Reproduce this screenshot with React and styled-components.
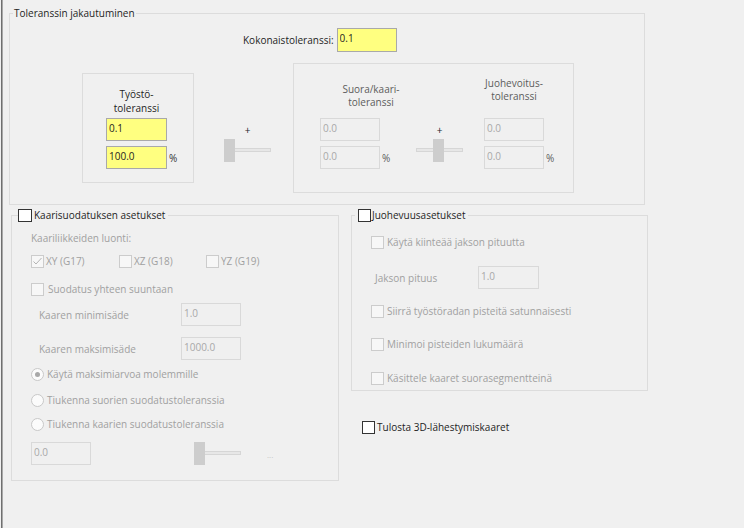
import React from 'react';
import styled, { createGlobalStyle } from 'styled-components';

const FONT = "'Open Sans', 'Liberation Sans', Arial, sans-serif";

const GlobalStyle = createGlobalStyle`
  html, body {
    margin: 0;
    padding: 0;
    background: #f0f0f0;
  }
  body {
    font-family: ${FONT};
    font-size: 10px;
    color: #1e1e1e;
  }
`;

const DISABLED = '#a0a0a0';

const Window = styled.div`
  width: 744px;
  height: 528px;
  box-sizing: border-box;
  overflow: hidden;
  padding-top: 7px;
  background: linear-gradient(
    to right,
    #f0f0f0 1px,
    #6f6f6f 1px,
    #6f6f6f 2px,
    #a8a8a8 2px,
    #a8a8a8 3px,
    #f0f0f0 3px
  );
`;

// === GROUP BOXES === //
const Group = styled.fieldset`
  margin: 0 0 0 ${({ $ml }) => $ml || 0}px;
  padding: 0 0 ${({ $pb }) => $pb}px;
  width: ${({ $w }) => $w}px;
  box-sizing: border-box;
  min-width: 0;
  border: 1px solid #dcdcdc;
`;

const Legend = styled.legend`
  margin-left: ${({ $ml }) => $ml}px;
  padding: 0 ${({ $pr }) => $pr}px 0 ${({ $pl }) => $pl}px;
  line-height: 13px;
  height: 13px;
  white-space: nowrap;
`;

const LegendInner = styled.span`
  display: inline-flex;
  align-items: center;
  gap: ${({ $gap }) => $gap}px;
  vertical-align: top;
`;

// === FIELDS === //
const Field = styled.input`
  width: ${({ $w }) => $w || 60}px;
  height: ${({ $h }) => $h || 23}px;
  box-sizing: border-box;
  margin: 0;
  padding: 0 1px 4px 2px;
  font-family: ${FONT};
  font-size: 10px;
  outline: none;
  flex: none;
  background: ${({ $yellow }) => ($yellow ? '#ffff80' : '#f0f0f0')};
  border: 1px solid ${({ $yellow }) => ($yellow ? '#a9a9a9' : '#d9d9d9')};
  color: ${({ $yellow }) => ($yellow ? '#1e1e1e' : '#a8a8a8')};
`;

const Pct = styled.span`
  margin-left: 2px;
  color: ${({ $dim }) => ($dim ? '#5c5c5c' : '#333')};
`;

// === TOP SECTION === //
const TotalRow = styled.div`
  display: flex;
  align-items: center;
  gap: 3px;
  height: 24px;
  margin-top: 8px;
  padding-left: 233px;
`;

const SplitRow = styled.div`
  display: flex;
  align-items: center;
  margin-top: 11px;
  padding-left: 72px;
`;

const Frame = styled.div`
  display: flex;
  align-items: flex-end;
  box-sizing: border-box;
  width: ${({ $w }) => $w}px;
  height: ${({ $h }) => $h}px;
  margin-left: ${({ $ml }) => $ml || 0}px;
  padding: 0 0 ${({ $pb }) => $pb}px ${({ $pl }) => $pl}px;
  border: 1px solid #dcdcdc;
`;

const Col = styled.div`
  display: flex;
  flex-direction: column;
  gap: 5px;
  width: ${({ $w }) => $w}px;
  margin-left: ${({ $ml }) => $ml || 0}px;
  flex: none;
`;

const ColTitle = styled.div`
  display: flex;
  flex-direction: column;
  align-items: center;
  width: ${({ $w }) => $w || 60}px;
  margin-left: ${({ $shift }) => $shift || 0}px;
  margin-bottom: ${({ $mb }) => $mb - 5}px;
  line-height: ${({ $lh }) => $lh}px;
  white-space: nowrap;
  color: ${({ $dim }) => ($dim ? '#5c5c5c' : '#1e1e1e')};
`;

const FieldLine = styled.div`
  display: flex;
  align-items: center;
`;

// === SLIDER === //
const SliderWrap = styled.div`
  display: flex;
  flex-direction: column;
  align-items: center;
  align-self: ${({ $top }) => ($top === undefined ? 'center' : 'flex-start')};
  margin-top: ${({ $top }) => $top || 0}px;
  margin-left: ${({ $ml }) => $ml || 0}px;
  flex: none;
`;

const Plus = styled.div`
  height: 12px;
  line-height: 12px;
  margin-bottom: 3px;
  font-size: 10px;
`;

const Track = styled.div`
  position: relative;
  width: 47px;
  height: 23px;

  &::before {
    content: '';
    position: absolute;
    left: 0;
    right: 0;
    top: 9px;
    height: 4px;
    box-sizing: border-box;
    background: #e7e7e7;
    border: 1px solid #d6d6d6;
  }
`;

const Thumb = styled.div`
  position: absolute;
  top: 0;
  left: ${({ $pos }) => $pos}px;
  width: 11px;
  height: 23px;
  background: #cdcdcd;
`;

function Slider({ pos, plus, top, ml }) {
  return (
    <SliderWrap $top={top} $ml={ml}>
      {plus && <Plus>+</Plus>}
      <Track>
        <Thumb $pos={pos} />
      </Track>
    </SliderWrap>
  );
}

// === LOWER SECTION === //
const Lower = styled.div`
  display: flex;
  align-items: flex-start;
  gap: 12px;
  margin-top: 4px;
  padding-left: 11px;
`;

const RightCol = styled.div`
  display: flex;
  flex-direction: column;
`;

const Box = styled.span`
  display: inline-flex;
  align-items: center;
  justify-content: center;
  width: ${({ $size }) => $size || 13}px;
  height: 13px;
  box-sizing: border-box;
  flex: none;
  border: 1px solid ${({ $on }) => ($on ? '#333' : '#cccccc')};
  background: ${({ $on }) => ($on ? '#fff' : '#f7f7f7')};
`;

const Round = styled(Box)`
  border-radius: 50%;
  border-color: #c8c8c8;
  background: #fbfbfb;

  &::after {
    content: '';
    display: ${({ $checked }) => ($checked ? 'block' : 'none')};
    width: 5px;
    height: 5px;
    border-radius: 50%;
    background: #a8a8a8;
  }
`;

const OptRow = styled.div`
  display: flex;
  align-items: center;
  height: 13px;
  line-height: 13px;
  margin-top: ${({ $mt }) => $mt}px;
  padding-left: ${({ $pl }) => $pl}px;
  color: ${({ $on }) => ($on ? '#1e1e1e' : DISABLED)};
  white-space: nowrap;
`;

const OptGrid = styled.div`
  display: grid;
  grid-template-columns: 88px 87px auto;
  height: 13px;
  line-height: 13px;
  margin-top: ${({ $mt }) => $mt}px;
  padding-left: ${({ $pl }) => $pl}px;
  color: ${DISABLED};
`;

const Opt = styled.div`
  display: flex;
  align-items: center;
  gap: ${({ $gap }) => ($gap === undefined ? 3 : $gap)}px;
  white-space: nowrap;
`;

const Caption = styled.div`
  line-height: 13px;
  margin-top: ${({ $mt }) => $mt}px;
  padding-left: ${({ $pl }) => $pl}px;
  color: ${DISABLED};
`;

const InputRow = styled.div`
  display: flex;
  align-items: center;
  height: 23px;
  margin-top: ${({ $mt }) => $mt}px;
  padding-left: ${({ $pl }) => $pl}px;
  color: ${DISABLED};
`;

const RowLabel = styled.span`
  width: ${({ $w }) => $w}px;
  flex: none;
`;

const Dots = styled.span`
  margin-left: 26px;
  margin-top: 2px;
  font-size: 8px;
  color: #c4c4c4;
`;

const Tick = () => (
  <svg width="11" height="11" viewBox="0 0 11 11">
    <polyline points="1.5,5.5 4,8 9.5,2" fill="none" stroke="#b4b4b4" strokeWidth="1" />
  </svg>
);

function Check({ label, on, checked, gap }) {
  return (
    <Opt $gap={gap}>
      <Box $on={on}>{checked && <Tick />}</Box>
      <span>{label}</span>
    </Opt>
  );
}

function Radio({ label, checked }) {
  return (
    <Opt>
      <Round $checked={checked} />
      <span>{label}</span>
    </Opt>
  );
}

export default function App() {
  return (
    <Window>
      <GlobalStyle />

      <Group $ml={9} $w={636} $pb={11}>
        <Legend $ml={3} $pl={1} $pr={1}>Toleranssin jakautuminen</Legend>

        <TotalRow>
          <span>Kokonaistoleranssi:</span>
          <Field $yellow $h={24} readOnly value="0.1" />
        </TotalRow>

        <SplitRow>
          <Frame $w={112} $h={110} $pl={23} $pb={13}>
            <Col $w={80}>
              <ColTitle $mb={3} $lh={14} $w={61}>
                <span>Työstö-</span>
                <span>toleranssi</span>
              </ColTitle>
              <FieldLine>
                <Field $yellow $w={61} readOnly value="0.1" />
              </FieldLine>
              <FieldLine>
                <Field $yellow $w={61} readOnly value="100.0" />
                <Pct>%</Pct>
              </FieldLine>
            </Col>
          </Frame>

          <Slider plus pos={0} top={61} ml={30} />

          <Frame $w={281} $h={130} $ml={22} $pl={26} $pb={23}>
            <Col $w={72}>
              <ColTitle $mb={9} $lh={13} $shift={21} $dim>
                <span>Suora/kaari-</span>
                <span>toleranssi</span>
              </ColTitle>
              <FieldLine>
                <Field readOnly value="0.0" />
              </FieldLine>
              <FieldLine>
                <Field readOnly value="0.0" />
                <Pct $dim>%</Pct>
              </FieldLine>
            </Col>

            <Slider plus pos={17} top={60} ml={24} />

            <Col $w={74} $ml={21}>
              <ColTitle $mb={15} $lh={13} $dim>
                <span>Juohevoitus-</span>
                <span>toleranssi</span>
              </ColTitle>
              <FieldLine>
                <Field readOnly value="0.0" />
              </FieldLine>
              <FieldLine>
                <Field readOnly value="0.0" />
                <Pct $dim>%</Pct>
              </FieldLine>
            </Col>
          </Frame>
        </SplitRow>
      </Group>

      <Lower>
        <Group $w={328} $pb={15}>
          <Legend $ml={6} $pl={0} $pr={3}>
            <LegendInner $gap={2}>
              <Box $on $size={14} />
              <span>Kaarisuodatuksen asetukset</span>
            </LegendInner>
          </Legend>

          <Caption $mt={10} $pl={19}>Kaariliikkeiden luonti:</Caption>

          <OptGrid $mt={10} $pl={19}>
            <Check label="XY (G17)" checked gap={2} />
            <Check label="XZ (G18)" gap={2} />
            <Check label="YZ (G19)" gap={2} />
          </OptGrid>

          <OptRow $mt={15} $pl={19}>
            <Check label="Suodatus yhteen suuntaan" gap={4} />
          </OptRow>

          <InputRow $mt={7} $pl={27}>
            <RowLabel $w={142}>Kaaren minimisäde</RowLabel>
            <Field readOnly value="1.0" />
          </InputRow>

          <InputRow $mt={11} $pl={27}>
            <RowLabel $w={142}>Kaaren maksimisäde</RowLabel>
            <Field readOnly value="1000.0" />
          </InputRow>

          <OptRow $mt={8} $pl={19}>
            <Radio label="Käytä maksimiarvoa molemmille" checked />
          </OptRow>
          <OptRow $mt={13} $pl={19}>
            <Radio label="Tiukenna suorien suodatustoleranssia" />
          </OptRow>
          <OptRow $mt={11} $pl={19}>
            <Radio label="Tiukenna kaarien suodatustoleranssia" />
          </OptRow>

          <InputRow $mt={11} $pl={19}>
            <Field readOnly value="0.0" />
            <Slider pos={0} ml={103} />
            <Dots>...</Dots>
          </InputRow>
        </Group>

        <RightCol>
          <Group $w={297} $pb={5}>
            <Legend $ml={3} $pl={3} $pr={3}>
              <LegendInner $gap={1}>
                <Box $on />
                <span>Juohevuusasetukset</span>
              </LegendInner>
            </Legend>

            <OptRow $mt={14} $pl={19}>
              <Check label="Käytä kiinteää jakson pituutta" />
            </OptRow>

            <InputRow $mt={17} $pl={23}>
              <RowLabel $w={103}>Jakson pituus</RowLabel>
              <Field $w={61} readOnly value="1.0" />
            </InputRow>

            <OptRow $mt={16} $pl={19}>
              <Check label="Siirrä työstöradan pisteitä satunnaisesti" />
            </OptRow>
            <OptRow $mt={20} $pl={19}>
              <Check label="Minimoi pisteiden lukumäärä" />
            </OptRow>
            <OptRow $mt={21} $pl={19}>
              <Check label="Käsittele kaaret suorasegmentteinä" />
            </OptRow>
          </Group>

          <OptRow $on $mt={30} $pl={11}>
            <Check label="Tulosta 3D-lähestymiskaaret" on gap={2} />
          </OptRow>
        </RightCol>
      </Lower>
    </Window>
  );
}
